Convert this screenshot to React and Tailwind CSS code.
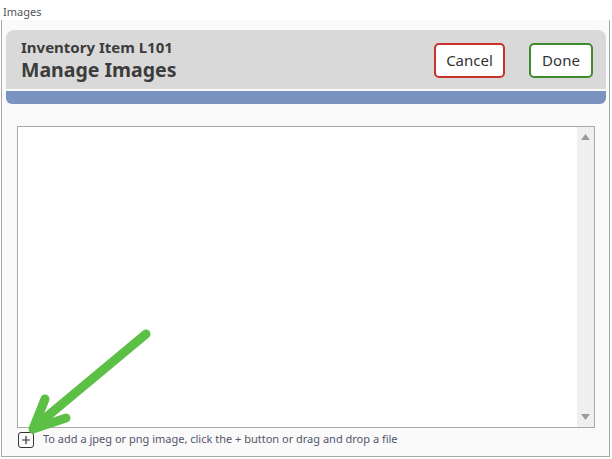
import React from 'react'

// Arrow overlay pointing at the add button
function GreenArrow() {
  return (
    <svg className="absolute left-0 top-0 pointer-events-none" width="612" height="459" viewBox="0 0 612 459">
      <g stroke="#5cbf46" strokeWidth="9" strokeLinecap="round" strokeLinejoin="round" fill="none">
        <line x1="146" y1="334" x2="38" y2="424" />
        <polyline points="45,399 33,429 66,418" />
      </g>
    </svg>
  )
}

function ScrollArrow({ down }) {
  return (
    <svg width="9" height="6" viewBox="0 0 9 6" className={down ? 'rotate-180' : ''}>
      <path d="M0 6 L4.5 0 L9 6 Z" fill="#9a9a9a" />
    </svg>
  )
}

export default function App() {
  return (
    <div className="relative w-[612px] h-[459px] bg-white overflow-hidden font-['Noto_Sans',sans-serif]">
      <div className="h-[20px] pl-[3px] pt-[5px] text-[11px] leading-[14px] text-[#555]">Images</div>

      <div className="ml-[1px] w-[609px] h-[437px] border-x border-b border-[#a9a9a9] bg-[#fafafa] pl-[4px] pt-[10px] flex flex-col">
        {/* header */}
        <div className="w-[600px]">
          <div className="h-[59px] bg-[#d9d9d9] rounded-t-[8px] flex items-center pl-[15px] pr-[13px]">
            <div className="flex-1 text-[#3c3c3c] font-bold pt-[1px]">
              <div className="text-[15px] leading-[20px]">Inventory Item L101</div>
              <div className="text-[19.5px] leading-[26px]">Manage Images</div>
            </div>
            <button className="w-[71px] h-[35px] border-2 border-[#c8322c] rounded-[5px] bg-white text-[15px] text-[#333] mt-[1px]">Cancel</button>
            <button className="ml-[24px] w-[64px] h-[35px] border-2 border-[#3e8c2e] rounded-[5px] bg-white text-[15px] text-[#333] mt-[1px]">Done</button>
          </div>
          <div className="h-[2px] bg-[#fafafa]" />
          <div className="h-[13px] bg-[#7b93c0] rounded-b-[6px]" />
        </div>

        {/* image list */}
        <div className="mt-[22px] ml-[11px] w-[578px] h-[302px] border border-[#a9a9a9] bg-white flex">
          <div className="flex-1" />
          <div className="w-[17px] bg-[#efefef] flex flex-col items-center justify-between py-[7px]">
            <ScrollArrow />
            <ScrollArrow down />
          </div>
        </div>

        {/* footer */}
        <div className="ml-[12px] mt-[4px] flex items-center">
          <div className="w-[16px] h-[16px] border border-[#333] rounded-[3px] flex items-center justify-center">
            <svg width="10" height="10" viewBox="0 0 10 10">
              <path d="M5 1 V9 M1 5 H9" stroke="#333" strokeWidth="1.2" />
            </svg>
          </div>
          <span className="ml-[9px] text-[11px] text-[#55556a] leading-[14px] mt-[-3px]">
            To add a jpeg or png image, click the + button or drag and drop a file
          </span>
        </div>
      </div>

      <GreenArrow />
    </div>
  )
}
